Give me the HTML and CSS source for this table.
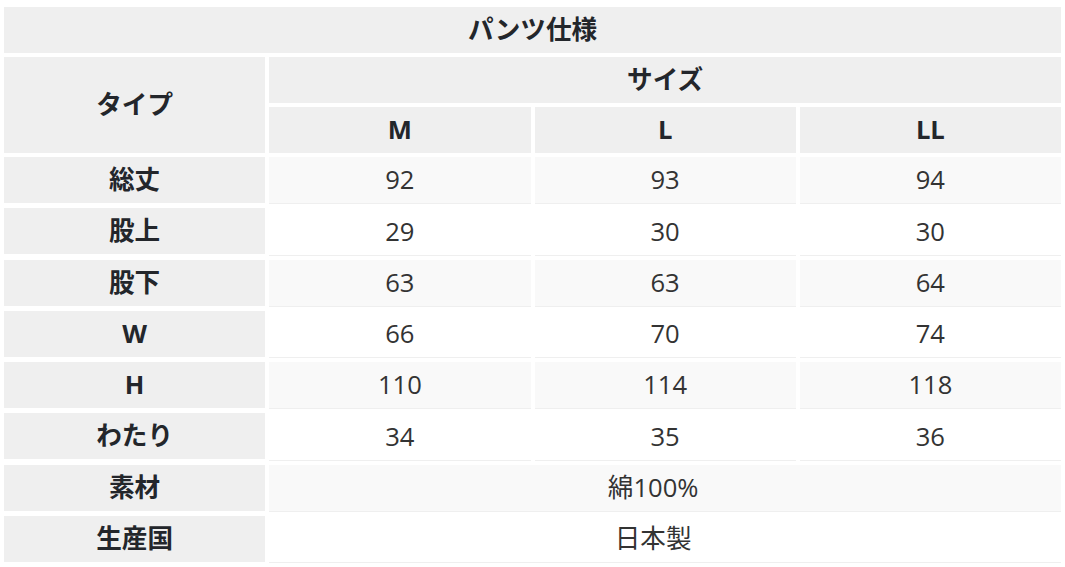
FILE: index.html
```html
<!DOCTYPE html>
<html lang="ja">
<head>
<meta charset="utf-8">
<link rel="stylesheet" href="styles.css">
</head>
<body>
<div class="spec">
  <div class="cell head span4">パンツ仕様</div>
  <div class="cell head rows2">タイプ</div>
  <div class="cell head span3">サイズ</div>
  <div class="cell head">M</div>
  <div class="cell head">L</div>
  <div class="cell head">LL</div>

  <div class="cell head">総丈</div>
  <div class="cell val odd">92</div><div class="cell val odd">93</div><div class="cell val odd">94</div>
  <div class="cell head">股上</div>
  <div class="cell val">29</div><div class="cell val">30</div><div class="cell val">30</div>
  <div class="cell head">股下</div>
  <div class="cell val odd">63</div><div class="cell val odd">63</div><div class="cell val odd">64</div>
  <div class="cell head">W</div>
  <div class="cell val">66</div><div class="cell val">70</div><div class="cell val">74</div>
  <div class="cell head">H</div>
  <div class="cell val odd">110</div><div class="cell val odd">114</div><div class="cell val odd">118</div>
  <div class="cell head">わたり</div>
  <div class="cell val">34</div><div class="cell val">35</div><div class="cell val">36</div>
  <div class="cell head">素材</div>
  <div class="cell val odd span3 merged">綿100%</div>
  <div class="cell head">生産国</div>
  <div class="cell val span3 merged">日本製</div>
</div>
</body>
</html>
```
FILE: styles.css
```css
html, body {
  margin: 0;
  padding: 0;
  background: #ffffff;
}
body {
  font-family: "Open Sans", "Noto Sans CJK JP", sans-serif;
  color: #333333;
}
.spec {
  display: grid;
  grid-template-columns: repeat(4, 1fr);
  grid-auto-rows: auto;
  gap: 4px;
  padding: 7px 4px 0 4px;
}
.cell {
  display: flex;
  align-items: center;
  justify-content: center;
  font-size: 25.6px;
  line-height: 1;
}
.head {
  height: 46px;
  background: #efefef;
  font-weight: 700;
  color: #23262b;
}
.val {
  height: 46.25px;
  border-bottom: 1px solid #efefef;
  background: #ffffff;
  color: #333333;
}
.val.odd {
  background: #f9f9f9;
}
.merged {
  padding-right: 24px;
}
.span4 { grid-column: span 4; }
.span3 { grid-column: span 3; }
.rows2 { grid-row: span 2; height: auto; }
```
